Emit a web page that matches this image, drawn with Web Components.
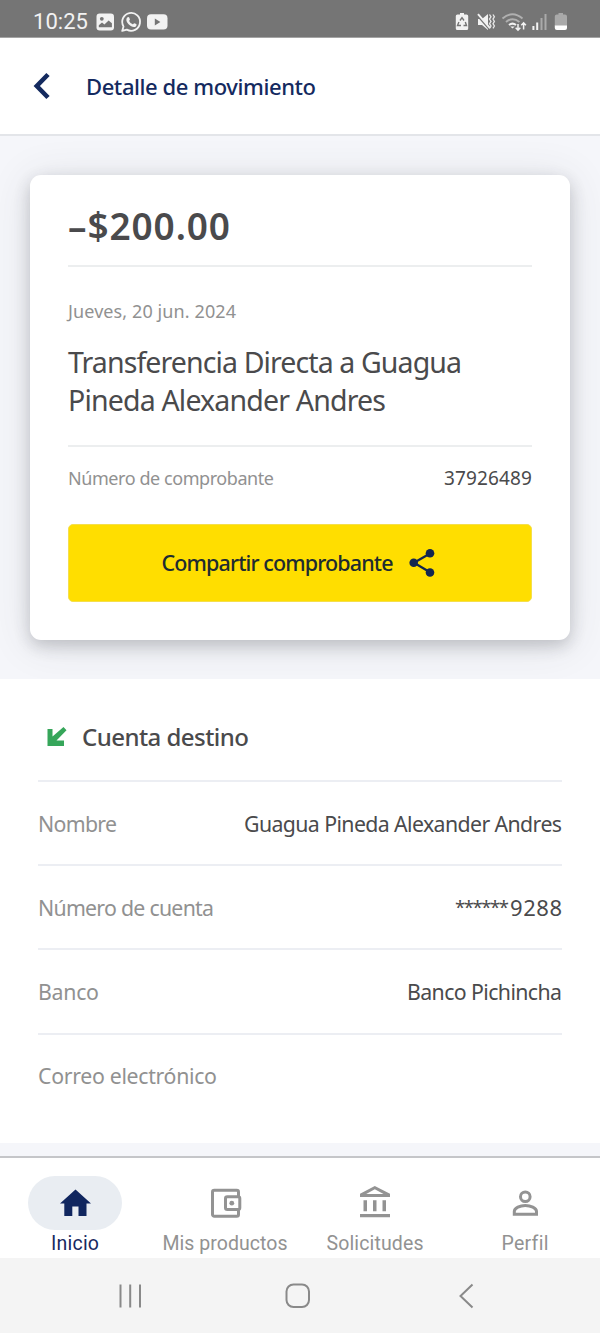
<!DOCTYPE html>
<html lang="es">
<head>
<meta charset="utf-8">
<title>Detalle de movimiento</title>
<style>
html,body{margin:0;padding:0;background:#fff}
body{width:600px;height:1333px;overflow:hidden;font-family:"Noto Sans","Open Sans",sans-serif;color:#4a4a4c}
</style>
</head>
<body>
<movement-screen></movement-screen>
<script>
function define(name, html, setup) {
  const template = document.createElement('template');
  template.innerHTML = html;
  customElements.define(name, class extends HTMLElement {
    connectedCallback() {
      if (this.shadowRoot) return;
      this.attachShadow({ mode: 'open' }).appendChild(template.content.cloneNode(true));
      if (setup) setup(this, this.shadowRoot);
    }
  });
}

/* A single line of text, tracked so that it spans the given width. */
define('track-text', `<style>:host{display:inline-block;white-space:nowrap}span{display:inline-block}</style><span><slot></slot></span>`,
  (host, root) => {
    const fit = () => {
      const span = root.querySelector('span');
      const target = Number(host.getAttribute('width'));
      const count = host.textContent.length;
      span.style.letterSpacing = '0px';
      const spacing = (target - span.getBoundingClientRect().width) / (count - 1);
      span.style.letterSpacing = spacing + 'px';
      span.style.marginRight = -spacing + 'px';
    };
    requestAnimationFrame(fit);
    fit();
  });

define('status-bar', `<style>
:host{display:flex;box-sizing:border-box;height:38px;padding:7px 31px 0 33px;background:#757575;border-bottom:1px solid #a4a4a4;color:#f2f2f2;align-items:center;justify-content:space-between;font:22px/28px Roboto,sans-serif}
div{display:flex;align-items:center;gap:6px}
svg{display:block}
</style>
<div><track-text width="55">10:25</track-text>
<svg width="76" height="24" viewBox="94 10 76 24">
<rect x="96.5" y="13.5" width="17.5" height="17" rx="3.2" fill="#f2f2f2"/><circle cx="101.8" cy="18.8" r="1.9" fill="#757575"/><path d="M98.8 27.2v-2l3.2-2.6 2.4 1.9 4.2-4 3.3 2.7v4z" fill="#757575"/>
<path d="M122.200 30.900l1.300-4.500a8.900 8.900 0 1 1 3.300 3.200z" fill="none" stroke="#f2f2f2" stroke-width="1.800" stroke-linejoin="round"/><path d="M127.600 17.200c.6-.5 1.300-.4 1.600.3l.7 1.800c.2.500-.9 1.400-.7 1.800.7 1.500 1.800 2.500 3.400 3.200.5.2 1.300-1.300 1.800-1.100l1.800.9c.6.3.4 1.700-.4 2.300-1.300 1-3.100.6-5-.4-1.800-1-3.400-2.700-4.100-4.400-.7-1.900-.3-3.500.9-4.400z" fill="#f2f2f2"/>
<rect x="147" y="14.300" width="20.500" height="15.200" rx="4" fill="#f2f2f2"/><path d="M154.800 18.600v6.800l5.600-3.400z" fill="#757575"/>
</svg></div>
<svg width="116" height="24" viewBox="454 10 116 24" fill="none">
<path d="M461 14.500v-1.500h4v1.500h2.600a1.600 1.600 0 0 1 1.600 1.600v12.300a1.600 1.600 0 0 1-1.600 1.600h-9.200a1.600 1.600 0 0 1-1.600-1.600v-12.300a1.600 1.600 0 0 1 1.600-1.600z" fill="#f2f2f2"/>
<path d="M461 20.500l2-2.800 2 2.800M466.300 22l1.200 3.500h-3M462 25.500h-3.500l1.400-3.500" stroke="#757575" stroke-width="1.400"/>
<path d="M479 19h4l6-5v16l-6-5h-4z" fill="#f2f2f2"/><path d="M477.500 14l13.500 15.500" stroke="#757575" stroke-width="2.500"/><path d="M479 14.200l12 14" stroke="#f2f2f2" stroke-width="1.900"/>
<path d="M490.500 14.500l1.500 2.300-1.500 2.300 1.500 2.300-1.500 2.300 1.500 2.300-1.500 2.300M494 14.500l1.400 2.300-1.400 2.300 1.400 2.300-1.400 2.300 1.400 2.300-1.400 2.300" stroke="#e8e8e8" stroke-width="1.300"/>
<path d="M503.500 18.500q10-8.500 20 0M507 22q6.700-5.500 13.400 0" stroke="#b0b0b0" stroke-width="2"/><path d="M510 25q3.500-2.800 7 0" stroke="#f2f2f2" stroke-width="2"/><path d="M511.300 26.500h4.400l-2.200 2z" fill="#f2f2f2"/>
<path d="M519 24v6M516.700 27.800l2.300 2.400 2.300-2.400M524.600 29.500v-6.500M522.300 25.300l2.300-2.400 2.300 2.400" stroke="#f2f2f2" stroke-width="1.500"/>
<path d="M534.400 26v4M538.200 22.500v7.500" stroke="#f2f2f2" stroke-width="2"/><path d="M542.500 18v12M546.500 14v16" stroke="#aaa" stroke-width="2"/>
<path d="M559.500 14.500v-1.500h4.500v1.500h2q2 0 2 2v9.500h-12.200v-9.500q0-2 2-2z" fill="#a9a9a9"/><path d="M555.800 25.500h12.200v2.500q0 2-2 2h-8.200q-2 0-2-2z" fill="#fff"/>
</svg>`);

define('page-header', `<style>
:host{display:flex;box-sizing:border-box;height:98px;background:#fff;border-bottom:2px solid #e3e5e9;align-items:center;color:#142a5f;font-size:22px;font-weight:500;line-height:30px;padding:0 34px 0 33px}
svg{display:block;margin-right:35px}
track-text{margin-bottom:2px}
</style>
<svg width="18" height="28" viewBox="0 0 18 28"><path d="M15 2.500L3.800 14 15 25.500" fill="none" stroke="#142a5f" stroke-width="4.600"/></svg>
<slot></slot>`);

define('data-row', `<style>
:host{display:flex;align-items:center;justify-content:space-between;box-sizing:border-box}
.label{color:#919191}.value{color:#4a4a4c}
</style><span class="label"><slot name="label"></slot></span><span class="value"><slot></slot></span>`);

define('share-button', `<style>
:host{display:block}
button{display:flex;width:100%;height:77.500px;border:1px solid #f5df4c;border-radius:5px;background:#ffde00;color:#202b30;font:500 21.500px/30px "Noto Sans",sans-serif;align-items:center;justify-content:center;padding:0 3px 0 0;gap:16px}
svg{display:block}
</style><button><slot></slot>
<svg width="26" height="30" viewBox="0 0 26 30"><path d="M21 5.500L5 14.700l16 9.500" stroke="#14264f" stroke-width="2.300" fill="none"/><circle cx="21" cy="5.300" r="4.300" fill="#14264f"/><circle cx="4.700" cy="14.800" r="4.300" fill="#14264f"/><circle cx="21" cy="24.500" r="4.300" fill="#14264f"/></svg></button>`);

define('receipt-card', `<style>
:host{display:block;background:#f5f6fa;height:543px;box-sizing:border-box;padding:39px 30px;overflow:hidden}
article{box-sizing:border-box;height:465px;background:#fff;border-radius:11px;padding:0 38px;box-shadow:0 6px 16px rgba(60,64,72,.24),0 4px 42px rgba(60,64,72,.13)}
.amount{height:92px;box-sizing:border-box;padding-top:26px;border-bottom:2px solid #eceeef;font-size:37px;font-weight:600;line-height:50px;margin-bottom:31px}
.date{height:26px;font-size:18px;line-height:26px;color:#919191}
h2{margin:19px 0 26px;font-weight:400;font-size:28.500px;line-height:38px}
h2 track-text{display:block}
data-row{border-top:2px solid #eceeef;font-size:18px;line-height:26px;height:79px;padding-bottom:15px}
.number{font-size:19px}
</style>
<article>
<div class="amount"><track-text width="162">–$200.00</track-text></div>
<div class="date"><track-text width="168">Jueves, 20 jun. 2024</track-text></div>
<h2><track-text width="394">Transferencia Directa a Guagua</track-text><track-text width="318">Pineda Alexander Andres</track-text></h2>
<data-row><track-text slot="label" width="206">Número de comprobante</track-text><track-text class="number" width="88">37926489</track-text></data-row>
<share-button><track-text width="232">Compartir comprobante</track-text></share-button>
</article>`);

define('account-section', `<style>
:host{display:block;box-sizing:border-box;height:464px;background:#fff;padding:0 38px}
header{height:101px;display:flex;align-items:center;padding:14px 0 0 9px;box-sizing:border-box;font-size:24px;font-weight:500;line-height:34px}
svg{display:block;margin-right:15px}
data-row{height:84.200px;border-top:2px solid #eceef3;font-size:21.300px;line-height:30px;padding-top:1px}
.mask{font-size:18.500px;vertical-align:top;margin-right:1px}
.digits{font-size:22px}
</style>
<header><svg width="20" height="20" viewBox="0 0 20 20"><path d="M0.500 2h5v7.500L16.500 0l3 3.200L9.500 13.500H17V19H0.500z" fill="#36a65a"/></svg><track-text width="167">Cuenta destino</track-text></header>
<data-row><track-text slot="label" width="79">Nombre</track-text><track-text width="318">Guagua Pineda Alexander Andres</track-text></data-row>
<data-row><track-text slot="label" width="176">Número de cuenta</track-text><span><track-text class="mask" width="54">******</track-text><track-text class="digits" width="52">9288</track-text></span></data-row>
<data-row><track-text slot="label" width="61">Banco</track-text><track-text width="155">Banco Pichincha</track-text></data-row>
<data-row><track-text slot="label" width="179">Correo electrónico</track-text></data-row>`);

define('nav-item', `<style>
:host{display:flex;flex-direction:column;align-items:center;color:#929292;font:19.500px/28px Roboto,sans-serif}
.icon{width:94px;height:54px;border-radius:27px;display:flex;align-items:center;justify-content:center}
:host([active]){color:#17295f}
:host([active]) .icon{background:#e9edf2}
</style><div class="icon"><slot name="icon"></slot></div><slot></slot>`);

define('tab-bar', `<style>
:host{display:grid;grid-template-columns:repeat(4,1fr);box-sizing:border-box;height:102px;background:#fff;border-top:2px solid #c5c6c9;padding-top:18px}
svg{display:block}
</style>
<nav-item active><svg slot="icon" width="36" height="36" viewBox="0 0 36 36"><path d="M18.500 4.500L3 18.500h4.300V31h8V21.500h6.200V31h8V18.500H34z" fill="#10265f"/></svg><track-text width="48">Inicio</track-text></nav-item>
<nav-item><svg slot="icon" width="36" height="36" viewBox="0 0 36 36" fill="none" stroke="#939393" stroke-width="3"><path d="M31.500 11.500V7a1.800 1.800 0 0 0-1.800-1.800H7.300A1.800 1.800 0 0 0 5.500 7v22.400a1.800 1.800 0 0 0 1.800 1.800h22.400a1.800 1.800 0 0 0 1.800-1.800V24.500"/><rect x="18.500" y="11.700" width="14.300" height="12.800" rx="1.800"/><circle cx="24.800" cy="18.200" r="2.400" fill="#939393" stroke="none"/></svg><track-text width="125">Mis productos</track-text></nav-item>
<nav-item><svg slot="icon" width="36" height="36" viewBox="0 0 36 36"><path fill="#939393" fill-rule="evenodd" d="M17.800 1L3 8.700V12h30V8.700zM17.800 4.300l8.700 4.700H9.200zM6.500 15.200H10v11H6.500zM16 15.200h3.500v11H16zM25.500 15.200H29v11h-3.500zM3 29h30v3.200H3z"/></svg><track-text width="97">Solicitudes</track-text></nav-item>
<nav-item><svg slot="icon" width="36" height="36" viewBox="0 0 36 36" fill="none" stroke="#939393" stroke-width="3"><circle cx="18.300" cy="11.800" r="4.800"/><path d="M7.300 29.200V26.500c0-3.500 5.800-6 11-6s11.200 2.500 11.200 6v2.700z"/></svg><track-text width="46">Perfil</track-text></nav-item>`);

define('system-bar', `<style>
:host{display:grid;grid-template-columns:repeat(3,1fr);padding:0 49px 0 46px;height:75px;box-sizing:border-box;background:#f4f4f4;align-items:center}
svg{display:block;justify-self:center}
</style>
<svg width="30" height="30" viewBox="0 0 30 30"><path d="M5.500 3.500v23M15.200 3.500v23M25 3.500v23" stroke="#898989" stroke-width="2"/></svg>
<svg width="30" height="30" viewBox="0 0 30 30"><rect x="3.500" y="3.500" width="22.500" height="22.500" rx="7" fill="none" stroke="#898989" stroke-width="2"/></svg>
<svg width="30" height="30" viewBox="0 0 30 30"><path d="M20.500 3.500L8.500 15l12 11.500" fill="none" stroke="#898989" stroke-width="2"/></svg>`);

define('movement-screen', `<style>
:host{display:flex;flex-direction:column;width:600px;height:1333px;background:#f5f6fa}
.gap{height:13px}
</style>
<status-bar></status-bar>
<page-header><track-text width="230">Detalle de movimiento</track-text></page-header>
<receipt-card></receipt-card>
<account-section></account-section>
<div class="gap"></div>
<tab-bar></tab-bar>
<system-bar></system-bar>`);
</script>
</body>
</html>
